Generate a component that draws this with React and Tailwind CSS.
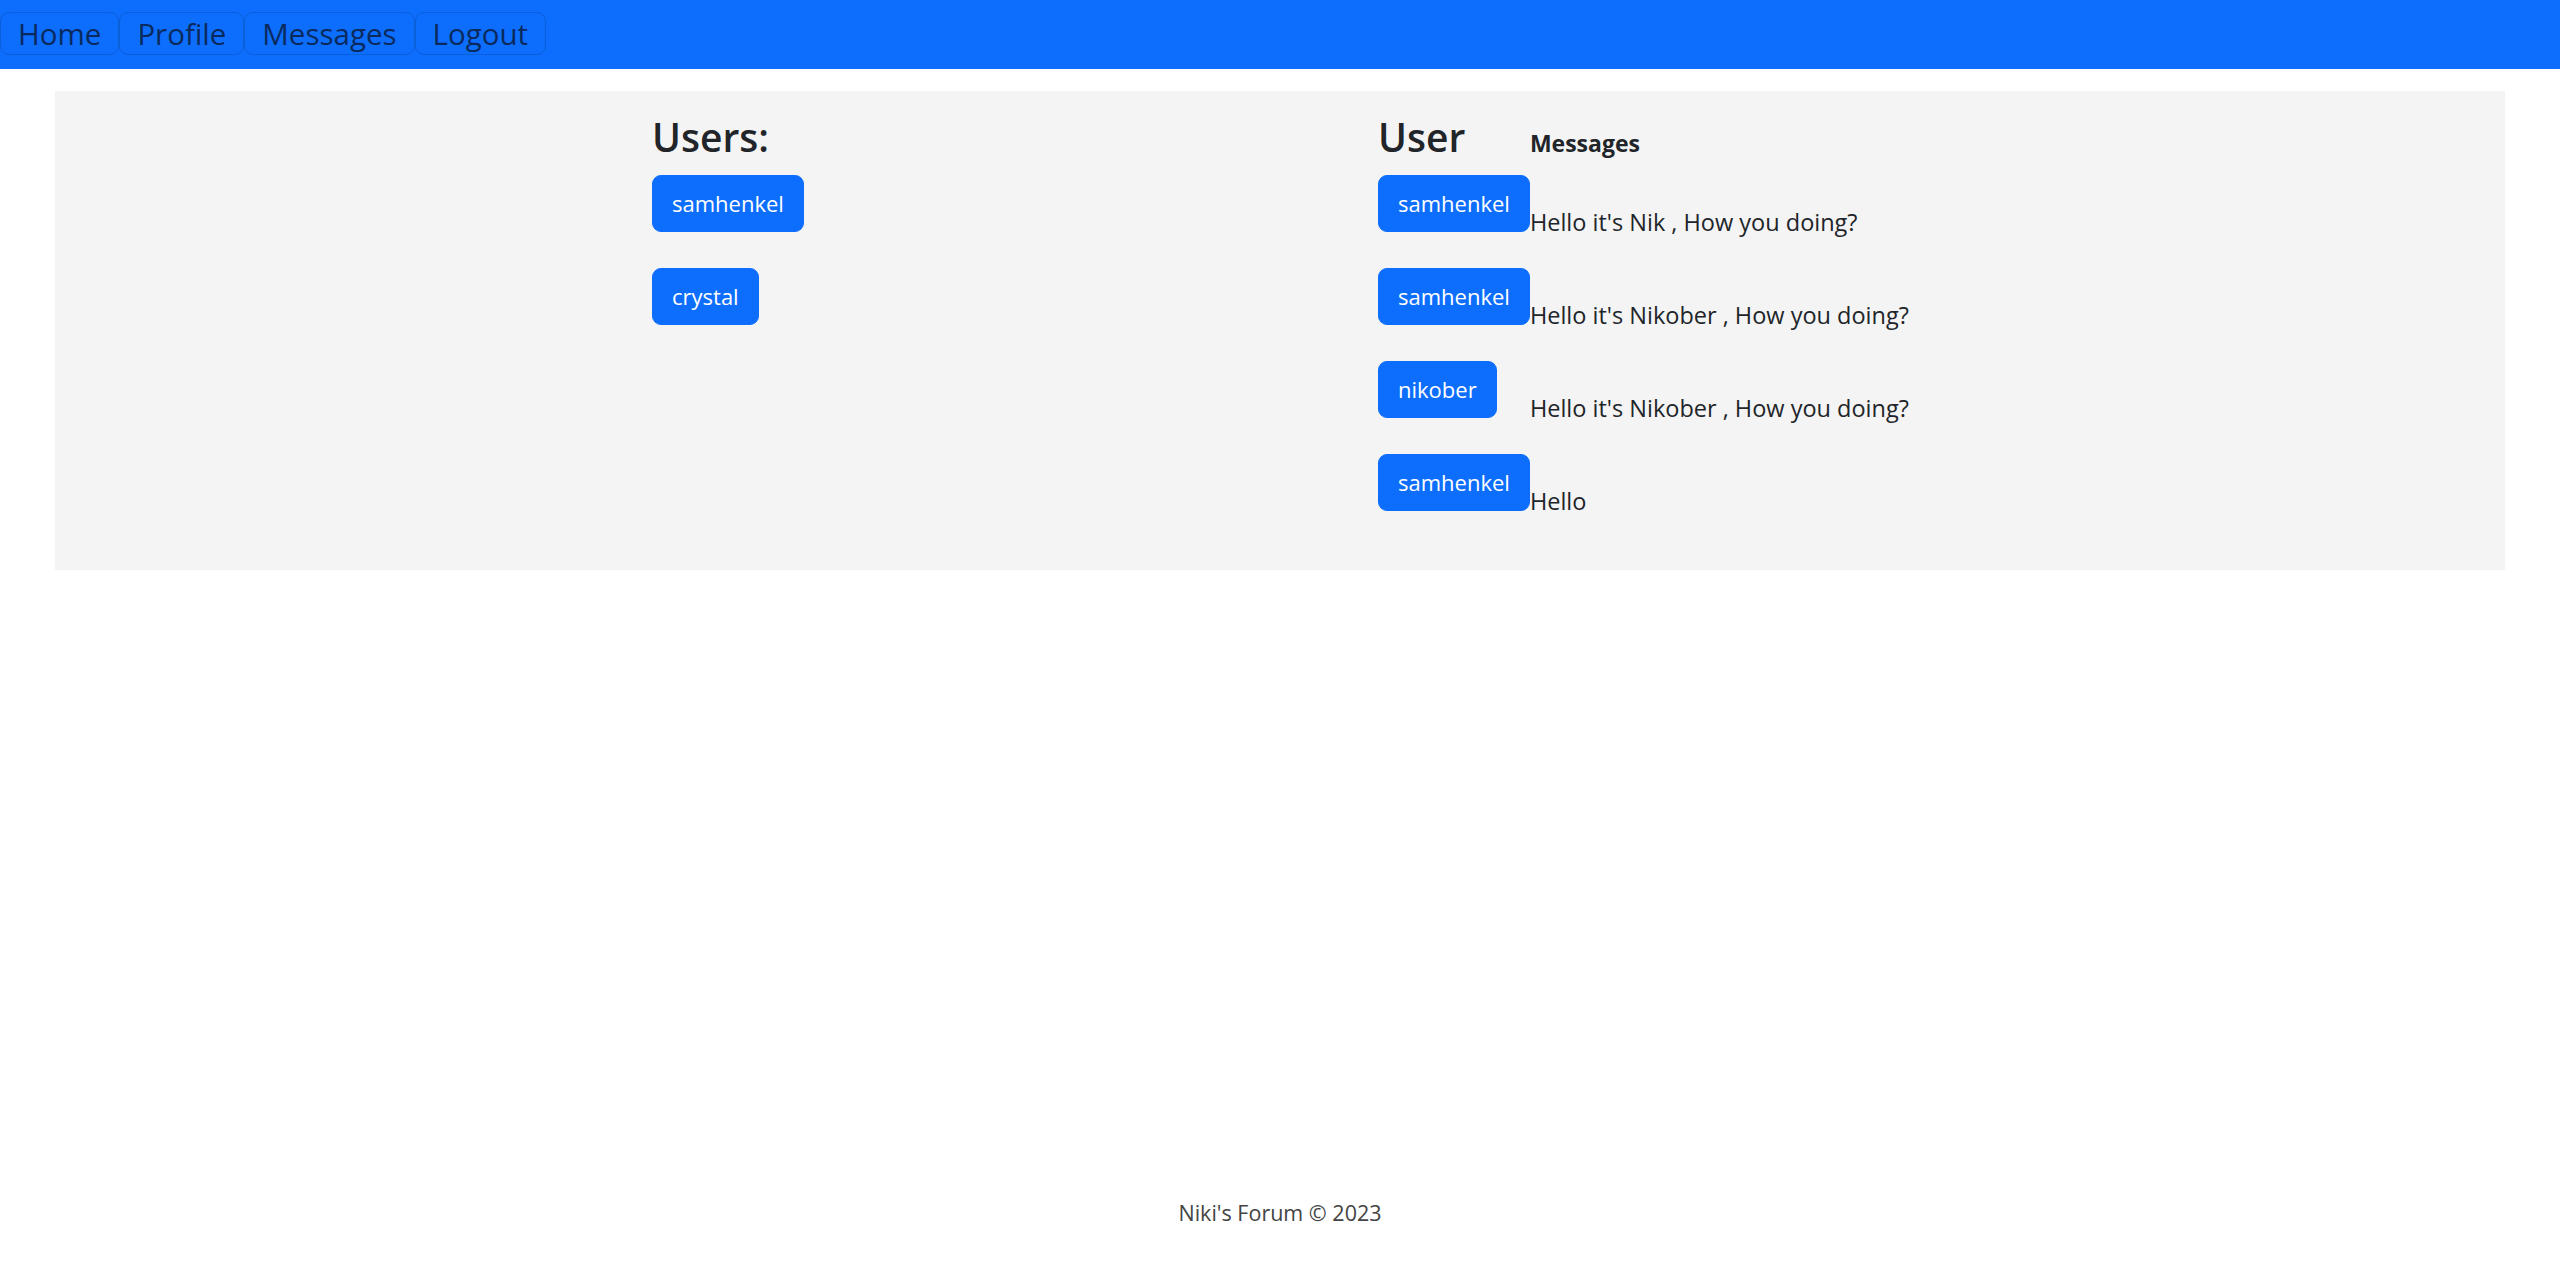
import React from 'react';

const navItems = ["Home", "Profile", "Messages", "Logout"];

const users = ["samhenkel", "crystal"];

const messages = [
  { id: 1, user: "samhenkel", text: "Hello it's Nik , How you doing?" },
  { id: 2, user: "samhenkel", text: "Hello it's Nikober , How you doing?" },
  { id: 3, user: "nikober", text: "Hello it's Nikober , How you doing?" },
  { id: 4, user: "samhenkel", text: "Hello" },
];

const font = { fontFamily: '"Segoe UI", "Open Sans", "Noto Sans", sans-serif' };

const UserButton = ({ name, className = "" }) => (
  <button
    className={`bg-[#0d6efd] text-white text-[22px] leading-[37px] px-[19px] py-[9px] border border-[#0d6efd] rounded-[9px] ${className}`}
  >
    {name}
  </button>
);

const App = () => {
  return (
    <div style={font} className="min-h-[1284px] flex flex-col bg-white text-[#212529]">
      {/* Navbar */}
      <nav className="h-[69px] bg-[#0d6efd] pt-[12px] flex items-start">
        {navItems.map((item) => (
          <button
            key={item}
            className="h-[43px] px-[17px] text-[29.5px] leading-none text-[#0a2a5e] border border-[#0b5fd9] rounded-[9px] flex items-center"
          >
            {item}
          </button>
        ))}
      </nav>

      {/* Main panel */}
      <main className="mx-[55px] mt-[22px] bg-[#f4f4f4] pt-[23px] pb-[23px] pl-[597px] flex">
        {/* Users list */}
        <div className="w-[726px] flex flex-col items-start">
          <h3 className="text-[39px] leading-[1.2] font-semibold mb-[14px]">Users:</h3>
          {users.map((u) => (
            <UserButton key={u} name={u} className="mb-[36px]" />
          ))}
        </div>

        {/* Messages table */}
        <table className="border-collapse">
          <thead>
            <tr>
              <th className="align-baseline text-left font-normal p-0">
                <h3 className="text-[39px] leading-[1.2] font-semibold mb-[14px]">User</h3>
              </th>
              <th className="align-baseline text-left text-[23px] font-bold p-0">Messages</th>
            </tr>
          </thead>
          <tbody>
            {messages.map((m) => (
              <tr key={m.id}>
                <td className="align-top p-0 pb-[36px]">
                  <UserButton name={m.user} />
                </td>
                <td className="align-bottom p-0 pb-[33px] text-[23.5px] leading-none whitespace-nowrap">
                  {m.text}
                </td>
              </tr>
            ))}
          </tbody>
        </table>
      </main>

      {/* Footer */}
      <footer className="mt-auto pb-[53px] text-center text-[21.5px] leading-[36px] text-[#444]">
        Niki's Forum © 2023
      </footer>
    </div>
  );
};

export default App;
